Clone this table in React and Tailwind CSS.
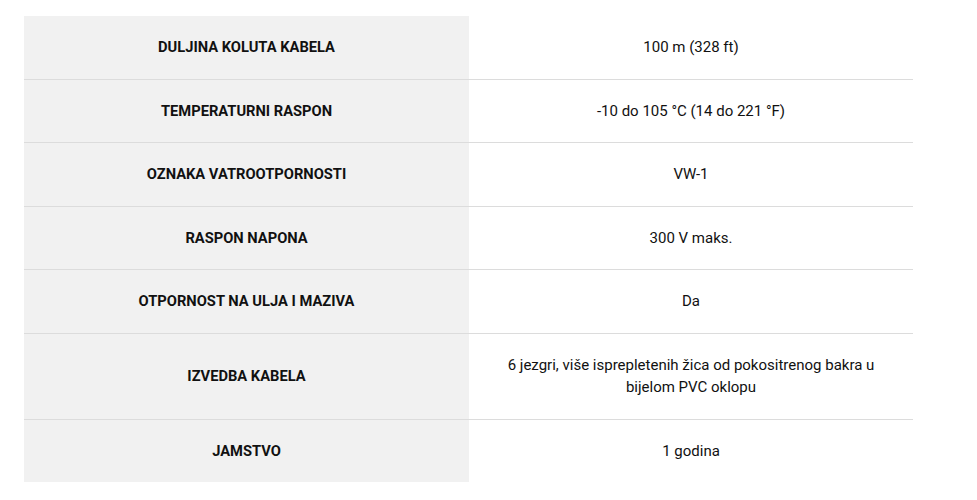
import React from 'react';

const specs = [
    { label: 'DULJINA KOLUTA KABELA', value: '100 m (328 ft)' },
    { label: 'TEMPERATURNI RASPON', value: '-10 do 105 °C (14 do 221 °F)' },
    { label: 'OZNAKA VATROOTPORNOSTI', value: 'VW-1' },
    { label: 'RASPON NAPONA', value: '300 V maks.' },
    { label: 'OTPORNOST NA ULJA I MAZIVA', value: 'Da' },
    { label: 'IZVEDBA KABELA', value: '6 jezgri, više isprepletenih žica od pokositrenog bakra u bijelom PVC oklopu' },
    { label: 'JAMSTVO', value: '1 godina' },
];

export default function App() {
    return (
        <div className="bg-white min-h-[500px] pt-4 pl-6" style={{ fontFamily: 'Roboto, "Noto Sans", sans-serif' }}>
            <table className="w-[889px] border-separate border-spacing-0 text-[15px] leading-[22.5px] text-[#111]">
                <tbody>
                    {specs.map((row, i) => {
                        const last = i === specs.length - 1;
                        const border = last ? '' : 'border-b border-[#dcdcdc]';
                        return (
                            <tr key={row.label}>
                                <td className={`w-[445px] bg-[#f1f1f1] px-8 pt-[20.25px] pb-[19.75px] text-center text-[14.7px] font-bold ${border}`}>{row.label}</td>
                                <td className={`px-8 pt-[20.25px] pb-[19.75px] text-center ${border}`}>{row.value}</td>
                            </tr>
                        );
                    })}
                </tbody>
            </table>
        </div>
    );
}
